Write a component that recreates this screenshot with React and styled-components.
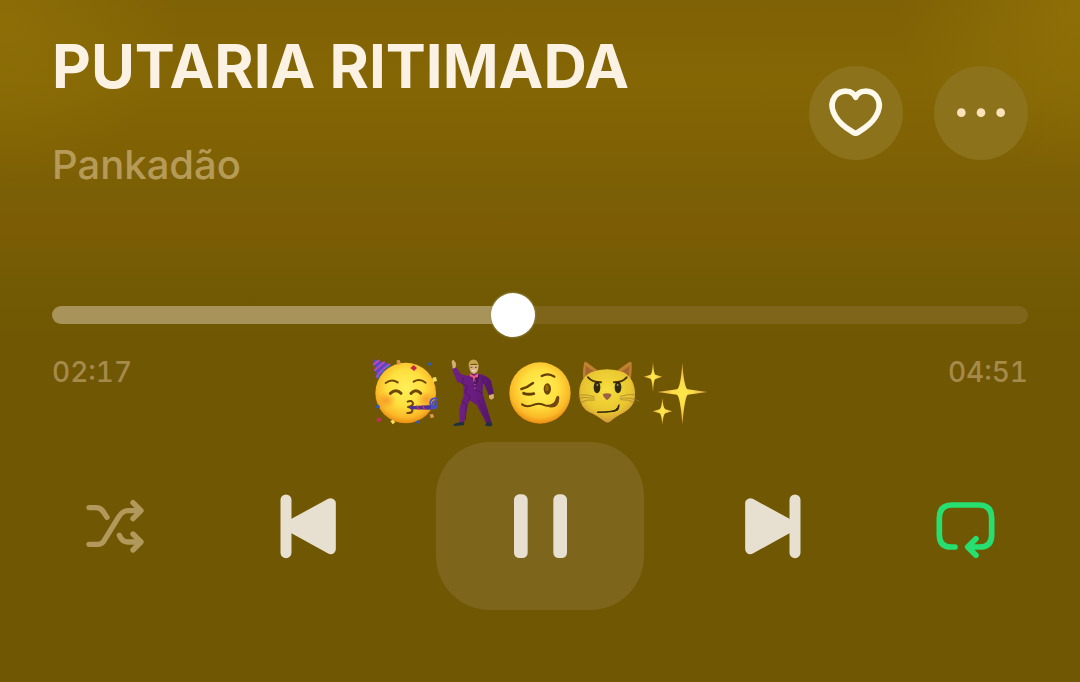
import React, { useState } from "react";
import styled, { createGlobalStyle } from "styled-components";

const GlobalStyle = createGlobalStyle`
  * { box-sizing: border-box; }
  body {
    margin: 0;
    background: #705703;
    font-family: Inter, "Liberation Sans", sans-serif;
  }
`;

const Player = styled.main`
  min-height: 100vh;
  padding: 28px 52px 64px;
  background:
    radial-gradient(ellipse 180px 160px at 0 20px, rgba(158, 126, 8, 0.4), transparent),
    radial-gradient(ellipse 180px 160px at 100% 10px, rgba(158, 126, 8, 0.45), transparent),
    linear-gradient(#806206 0, #846605 80px, #806205 150px, #7b5f06 195px, #7c5c05 232px, #765d05 256px, #725a04 290px, #705703 340px);
`;

const Header = styled.header`
  display: flex;
  justify-content: space-between;
  align-items: flex-start;
  height: 263px;
`;

const Title = styled.h1`
  margin: 0;
  color: #fbf2e4;
  font-size: 60px;
  font-weight: 700;
  line-height: 76px;
  white-space: nowrap;
`;

const Artist = styled.p`
  margin: 36px 0 0;
  color: #b69b58;
  font-size: 40px;
  font-weight: 500;
  line-height: 50px;
`;

const Actions = styled.div`
  display: flex;
  gap: 31px;
  padding-top: 38px;
`;

const RoundButton = styled.button`
  width: 94px;
  height: 94px;
  padding: 0;
  border: 0;
  border-radius: 50%;
  background: #8b721b;
  cursor: pointer;

  svg { display: block; }
`;

const Seek = styled.input`
  display: block;
  appearance: none;
  width: 100%;
  height: 48px;
  margin: 0;
  background: transparent;
  cursor: pointer;

  &::-webkit-slider-runnable-track {
    height: 18px;
    border-radius: 9px;
    background: linear-gradient(to right, #a8935a var(--played), #7e651a var(--played));
  }

  &::-webkit-slider-thumb {
    appearance: none;
    width: 44px;
    height: 44px;
    margin-top: -13px;
    border-radius: 50%;
    background: #fff;
    box-shadow: 0 0 2px 1px rgba(150, 145, 80, 0.6);
  }
`;

const TimeRow = styled.div`
  display: grid;
  grid-template-columns: 1fr auto 1fr;
  margin-top: 17px;
`;

const Time = styled.time`
  color: #a58a4b;
  font-size: 28px;
  font-weight: 500;
  font-variant-numeric: tabular-nums;
  line-height: 32px;
  text-align: ${(p) => p.$align || "left"};
`;

const Emojis = styled.div`
  display: flex;

  svg { display: block; }
`;

const Controls = styled.div`
  display: grid;
  grid-template-columns: 126px 1fr 208px 1fr 126px;
  justify-items: center;
  align-items: center;
  margin-top: 14px;
`;

const ControlButton = styled.button`
  display: flex;
  align-items: center;
  justify-content: center;
  padding: 0;
  border: 0;
  background: transparent;
  color: ${(p) => p.$color || "#e7e0d0"};
  cursor: pointer;
`;

const PauseButton = styled(ControlButton)`
  width: 100%;
  height: 168px;
  border-radius: 54px;
  background: #7d651b;
`;

function Icon({ size = 64, box, children }) {
  return (
    <svg width={size} height={size} viewBox={box} fill="none" stroke="currentColor" strokeLinecap="round" strokeLinejoin="round" aria-hidden="true">
      {children}
    </svg>
  );
}

function Emoji({ label, box, children }) {
  return (
    <svg width="68" height="72" viewBox={box} role="img" aria-label={label} strokeLinecap="round" strokeLinejoin="round">
      {children}
    </svg>
  );
}

const EmojiColors = () => (
  <defs>
    <radialGradient id="face" cx="50%" cy="42%" r="60%">
      <stop offset="0" stopColor="#fff05a" />
      <stop offset="0.5" stopColor="#ffdf3e" />
      <stop offset="0.8" stopColor="#fbb928" />
      <stop offset="1" stopColor="#e8830f" />
    </radialGradient>
    <radialGradient id="blush">
      <stop offset="0" stopColor="#f58a25" stopOpacity="0.7" />
      <stop offset="1" stopColor="#f58a25" stopOpacity="0" />
    </radialGradient>
    <linearGradient id="suit" x1="0" x2="1">
      <stop offset="0" stopColor="#702084" />
      <stop offset="0.6" stopColor="#671c7c" />
      <stop offset="1" stopColor="#4f1566" />
    </linearGradient>
    <radialGradient id="cat" cx="50%" cy="38%" r="62%">
      <stop offset="0" stopColor="#f7df3e" />
      <stop offset="0.7" stopColor="#e8c42f" />
      <stop offset="1" stopColor="#d0963a" />
    </radialGradient>
    <radialGradient id="spark">
      <stop offset="0" stopColor="#ffe94a" />
      <stop offset="0.4" stopColor="#fddc48" />
      <stop offset="1" stopColor="#e2a050" />
    </radialGradient>
  </defs>
);

const Partying = () => (
  <Emoji label="Partying face" box="30 18 204 216">
    <EmojiColors />
    <circle cx="137" cy="129" r="91" fill="url(#face)" />
    <ellipse cx="79" cy="151" rx="31" ry="25" fill="url(#blush)" />
    <ellipse cx="198" cy="148" rx="29" ry="25" fill="url(#blush)" />
    <path d="M39 28 95 44Q72 55 53 90Z" fill="#5947bd" />
    <path d="M41 43 56 32M45 60 72 37M50 80Q64 59 88 43" stroke="#b749bd" strokeWidth="6" fill="none" />
    <path d="m53 84 4-8M65 67l6-7M80 53l8-6" stroke="#3477ce" strokeWidth="5" />
    <g stroke="#704606" strokeWidth="6" fill="none">
      <path d="M77 99Q95 85 113 97M161 95Q179 84 197 98" />
      <path d="M91 130Q108 114 123 130M153 130Q168 115 182 130" strokeWidth="9" />
      <path d="M143 155Q155 149 159 159Q160 168 144 171Q159 173 157 183Q154 190 142 189" strokeWidth="6" />
    </g>
    <path d="M148 169 216 165 214 179 151 178Z" fill="#4c3193" />
    <path d="m171 168 5 10m12-11 5 11" stroke="#cf365c" strokeWidth="4" />
    <path d="M213 175Q240 175 236 154Q229 139 214 149Q205 164 219 169Q233 166 228 155Q218 151 218 162" fill="none" stroke="#4a4fc0" strokeWidth="6" />
    <path d="m151 54 10-9 10 9-9 9Z" fill="#c8264c" />
    <path d="m48 209 9-8 9 8-9 8Z" fill="#c52f62" />
    <path d="m201 42 8-7 8 7-8 7ZM46 170l7-8 8 8-7 7ZM167 216l7-7 6 7-6 6Z" fill="#315bb0" />
    <path d="m217 83 11-2 3 12-12 3ZM91 213l8-4 7 8-8 6Z" fill="#f5df58" />
    <path d="m110 31 9-1 4 11-12 4ZM209 193l10-1 4 10-11 3Z" fill="#dd954b" />
  </Emoji>
);

const Dancing = () => (
  <Emoji label="Man dancing" box="234 18 204 216">
    <path d="M279 60 275 36Q276 29 281 30L288 40 287 57Z" fill="#d5ae77" />
    <path d="M276 57 289 52 302 72 324 78 340 70 362 73Q383 78 393 92L402 132 387 137 373 104 369 99 368 130 374 151 395 218 379 220 350 165 328 150 319 184 312 218 299 219 298 177 311 137 310 102 292 97Z" fill="url(#suit)" />
    <path d="M310 83 306 101 323 108 315 127 331 139 326 154M367 80 371 100M343 87 347 120 367 129M306 152 319 164 316 210M356 151 387 215" fill="none" stroke="#521860" strokeWidth="3" />
    <path d="M327 72 340 86 360 73 350 108Z" fill="#501459" />
    <path d="M329 70 342 78 355 69 354 81 345 83 341 97 338 82 329 79Z" fill="#e95c82" />
    <path d="M345 92v28" stroke="#c58ab0" strokeWidth="3" strokeDasharray="1 10" />
    <path d="M328 45Q326 66 341 72Q358 68 355 45Z" fill="#d9b27d" />
    <path d="M326 52Q323 31 338 29Q355 27 356 51L350 41 332 42Z" fill="#c5a550" />
    <path d="M333 52h3m10 0h3" stroke="#614026" strokeWidth="3" />
    <path d="M337 62q5 4 9 0" fill="none" stroke="#fff0df" strokeWidth="3" />
    <path d="m387 136 14-5 1 12-7 6-8-4Z" fill="#d5ae77" />
    <path d="m298 217 15 0-1 9-30 2q-5-5 6-8ZM380 218l14-2 3 8-2 5-18-1q-3-4 3-10Z" fill="#1d3140" />
  </Emoji>
);

const Woozy = () => (
  <Emoji label="Woozy face" box="243 228 204 216">
    <circle cx="345" cy="339" r="92" fill="url(#face)" />
    <g fill="none" stroke="#654006">
      <path d="M289 327Q307 323 324 309" strokeWidth="7" />
      <path d="M296 340Q310 345 326 341" strokeWidth="9" />
      <path d="M350 288Q370 277 388 290" strokeWidth="7" />
      <path d="M291 373Q303 382 321 376Q342 366 360 376Q380 382 398 362" strokeWidth="6" />
    </g>
    <path d="M358 374Q385 384 394 351Q402 342 403 354Q402 387 373 382Z" fill="#734713" />
    <ellipse cx="367" cy="327" rx="11" ry="17" fill="#704607" />
    <ellipse cx="366" cy="324" rx="5" ry="10" fill="#9a6908" />
  </Emoji>
);

const SmirkCat = () => (
  <Emoji label="Cat with wry smile" box="447 228 204 216">
    <path d="M475 302Q472 270 478 247Q480 243 487 248L519 272 576 272 611 247Q619 242 620 250Q621 280 616 300Z" fill="#bf8130" />
    <path d="M481 291 482 258 510 276ZM612 291 614 258 588 276Z" fill="#a5652c" />
    <path d="M463 348Q459 296 500 276Q545 260 594 276Q632 296 630 348Q630 377 598 397Q566 414 557 424Q547 431 538 424Q513 405 493 397Q466 383 463 348Z" fill="url(#cat)" />
    <path d="M489 292Q502 307 528 307M605 292Q593 307 567 307" fill="none" stroke="#49370a" strokeWidth="6" />
    <ellipse cx="516" cy="322" rx="10" ry="18" fill="#302b0d" />
    <ellipse cx="579" cy="322" rx="10" ry="18" fill="#302b0d" />
    <circle cx="517" cy="315" r="3" fill="#9b9263" />
    <circle cx="578" cy="315" r="3" fill="#9b9263" />
    <path d="M533 343Q546 336 559 343Q560 350 546 361Q534 352 533 343Z" fill="#9b6045" />
    <path d="M518 396Q554 397 571 390Q578 384 582 374Q582 383 579 389Q572 397 518 397Z" fill="#30270a" stroke="#30270a" strokeWidth="3" />
    <path d="M461 354Q480 350 508 355M467 345Q485 342 508 350M465 368Q486 356 508 360M585 355Q613 350 642 363M586 349Q610 341 628 344M587 359Q611 357 630 368" fill="none" stroke="#98783a" strokeWidth="2" />
  </Emoji>
);

const Sparkles = () => (
  <Emoji label="Sparkles" box="336 18 204 216">
    <g fill="url(#spark)">
      <path d="M457 38Q462 113 473 118L532 126 473 134Q464 142 457 223Q451 142 441 134L382 126 441 118Q452 112 457 38Z" />
      <path d="M369 35Q371 71 376 74L397 80 376 87Q371 89 369 126Q366 89 362 86L341 80 362 74Q367 70 369 35Z" />
      <path d="M397 143Q400 176 406 178L427 184 406 190Q400 193 397 224Q394 193 389 190L368 184 389 178Q395 174 397 143Z" />
    </g>
  </Emoji>
);

const formatTime = (s) =>
  `${String(Math.floor(s / 60)).padStart(2, "0")}:${String(s % 60).padStart(2, "0")}`;

const DURATION = 291;

export default function App() {
  const [position, setPosition] = useState(137);

  return (
    <>
      <GlobalStyle />
      <Player>
        <Header>
          <div>
            <Title>PUTARIA RITIMADA</Title>
            <Artist>Pankadão</Artist>
          </div>
          <Actions>
            <RoundButton type="button" aria-label="Like">
              <Icon size={94} box="27 33 282 282">
                <path d="M167 127C158 103 122 103 105 124C84 153 103 192 137 217L160 232Q167 237 174 232L196 217C231 192 250 153 229 124C212 103 176 103 167 127Z" stroke="#fff9ec" strokeWidth="17" />
              </Icon>
            </RoundButton>
            <RoundButton type="button" aria-label="More options">
              <Icon size={94} box="402 33 282 282">
                <g fill="#fbe2b9" stroke="none">
                  <circle cx="484" cy="173" r="13" />
                  <circle cx="543" cy="173" r="13" />
                  <circle cx="602" cy="173" r="13" />
                </g>
              </Icon>
            </RoundButton>
          </Actions>
        </Header>
        <Seek
          type="range"
          aria-label="Seek"
          min="0"
          max={DURATION}
          value={position}
          onChange={(e) => setPosition(Number(e.target.value))}
          style={{ "--played": `${(position / DURATION) * 100}%` }}
        />
        <TimeRow>
          <Time>{formatTime(position)}</Time>
          <Emojis>
            <Partying />
            <Dancing />
            <Woozy />
            <SmirkCat />
            <Sparkles />
          </Emojis>
          <Time $align="right">{formatTime(DURATION)}</Time>
        </TimeRow>
        <Controls>
          <ControlButton type="button" aria-label="Shuffle" $color="#b1985b">
            <Icon box="39 42 192 192">
              <path d="M57 83H78Q92 83 100 95L111 112M57 193H84Q94 193 101 184L145 112Q158 92 174 92H212M148 166Q156 186 173 186H212M189 68 213 92 189 116M189 162 213 186 189 210" strokeWidth="16" />
            </Icon>
          </ControlButton>
          <ControlButton type="button" aria-label="Previous">
            <Icon size={72} box="603 30 216 216">
              <path d="M648 60V218" strokeWidth="33" />
              <path d="M657 138 782 70V207Z" fill="currentColor" strokeWidth="31" />
            </Icon>
          </ControlButton>
          <PauseButton type="button" aria-label="Pause">
            <Icon size={72} box="237 630 216 216">
              <rect x="267" y="643" width="41" height="191" rx="16" fill="currentColor" stroke="none" />
              <rect x="385" y="643" width="41" height="191" rx="16" fill="currentColor" stroke="none" />
            </Icon>
          </PauseButton>
          <ControlButton type="button" aria-label="Next">
            <Icon size={72} box="51 30 216 216">
              <path d="M225 60V218" strokeWidth="33" />
              <path d="M216 138 91 70V207Z" fill="currentColor" strokeWidth="31" />
            </Icon>
          </ControlButton>
          <ControlButton type="button" aria-label="Repeat" $color="#26df70">
            <Icon box="639 42 192 192">
              <path d="M705 201H694Q658 201 658 164V114Q658 75 696 75H777Q815 75 815 114V164Q815 201 779 201H748M768 176 743 201 768 226" strokeWidth="17" />
            </Icon>
          </ControlButton>
        </Controls>
      </Player>
    </>
  );
}
